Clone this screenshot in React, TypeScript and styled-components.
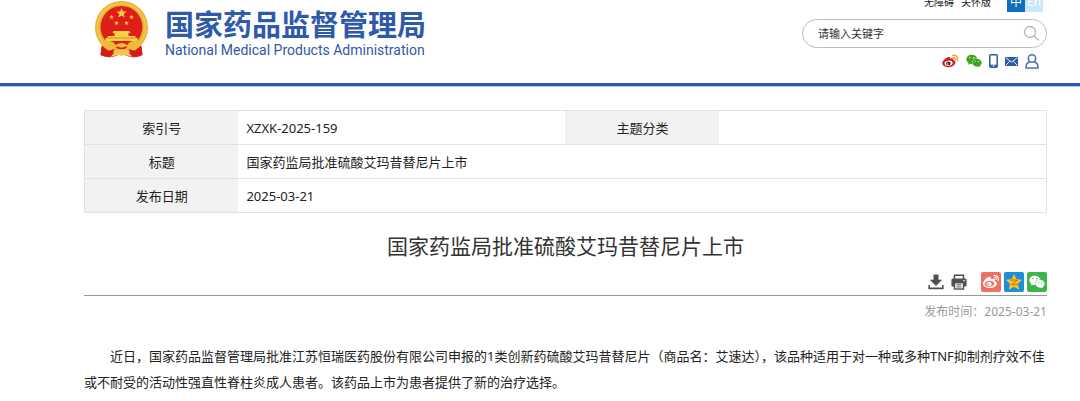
import React from "react";
import styled, { createGlobalStyle } from "styled-components";
import { FaWeibo, FaWeixin } from "react-icons/fa";

const BLUE = "#2f5aa8";

const GlobalStyle = createGlobalStyle`
  * { box-sizing: border-box; }
  body {
    margin: 0;
    background: #fff;
    color: #333;
    font: 13px/26px "Noto Sans", "Noto Sans CJK SC", sans-serif;
  }
  a { color: inherit; text-decoration: none; }
`;

const Header = styled.header`
  display: flex;
  justify-content: space-between;
  padding: 0 33px 14px 94px;
  border-bottom: 3px solid ${BLUE};
  box-shadow: 0 1px 0 #b4cbe6;
`;

const Brand = styled.a`
  display: flex;
  align-items: flex-start;
  gap: 16px;
  color: ${BLUE};
`;

const BrandText = styled.span`
  display: flex;
  flex-direction: column;
  padding-top: 5px;
`;

const BrandName = styled.strong`
  font: 700 29px/36px "Noto Sans CJK SC", sans-serif;
  white-space: nowrap;
`;

const BrandSub = styled.span`
  font: 400 14px/18px Roboto, sans-serif;
  white-space: nowrap;
`;

const Tools = styled.div`
  display: flex;
  flex-direction: column;
  width: 245px;
`;

const TopLinks = styled.nav`
  display: flex;
  justify-content: flex-end;
  align-items: flex-end;
  height: 12px;
  margin-bottom: 7px;
  padding-right: 4px;
  overflow: hidden;
  font-size: 10px;
  line-height: 20px;
  color: #222;
`;

const TopLink = styled.a`
  margin-right: 7px;
`;

const Languages = styled.span`
  display: flex;
  margin-left: 9px;
`;

const Language = styled.a<{ $active?: boolean }>`
  width: 18px;
  font-size: 12px;
  text-align: center;
  color: #fff;
  background: ${(p) => (p.$active ? "#0e6fbd" : "#c8e6fc")};
`;

const Search = styled.form`
  display: flex;
  align-items: center;
  height: 29px;
  padding: 0 6px 0 15px;
  border: 1px solid #bdbdbd;
  border-radius: 15px;
`;

const SearchInput = styled.input`
  flex: 1;
  min-width: 0;
  padding: 0;
  border: 0;
  outline: 0;
  background: none;
  font: 11px/20px "Noto Sans", "Noto Sans CJK SC", sans-serif;
  &::placeholder { color: #333; opacity: 1; }
`;

const IconButton = styled.button`
  display: flex;
  padding: 0;
  border: 0;
  background: none;
  color: #505050;
  cursor: pointer;
`;

const Channels = styled.nav`
  display: flex;
  justify-content: flex-end;
  align-items: center;
  gap: 7px;
  height: 16px;
  margin-top: 5px;
  padding-right: 8px;
  a { display: flex; }
`;

const Main = styled.main`
  padding: 24px 33px 8px 84px;
`;

const InfoTable = styled.table`
  width: 100%;
  table-layout: fixed;
  border-collapse: collapse;
  border: 1px solid #e2e2e2;
  color: #222;
`;

const InfoRow = styled.tr`
  height: 34px;
  border-bottom: 1px solid #e2e2e2;
`;

const LabelCol = styled.col`
  width: 16%;
`;

const ValueCol = styled.col`
  width: 34%;
`;

const Label = styled.th`
  padding: 0;
  font-weight: 400;
  background: #f2f2f2;
`;

const Value = styled.td`
  padding: 0 8px;
`;

const Title = styled.h1`
  margin: 17px 0 10px;
  font-size: 21px;
  line-height: 32px;
  font-weight: 400;
  text-align: center;
`;

const Share = styled.div`
  display: flex;
  justify-content: flex-end;
  align-items: center;
  gap: 7px;
  padding-bottom: 3px;
  border-bottom: 1px solid #999;
`;

const ShareLinks = styled.div`
  display: flex;
  gap: 3px;
  margin-left: 7px;
`;

const ShareLink = styled.a<{ $color: string }>`
  display: flex;
  align-items: center;
  justify-content: center;
  width: 20px;
  height: 20px;
  border-radius: 2px;
  color: #fff;
  background: ${(p) => p.$color};
`;

const Published = styled.p`
  margin: 6px 0 21px;
  font-size: 12px;
  line-height: 20px;
  text-align: right;
  color: #999;
`;

const Article = styled.p`
  margin: 0;
  text-indent: 2em;
  color: #222;
`;

const Emblem = () => (
  <svg width="55" height="58" viewBox="0 0 54 58" aria-hidden="true">
    <path d="M8 43 L6 55 Q12 58 18 57 L27 54 L36 57 Q43 58 48 55 L46 43Z" fill="#d9201b" />
    <circle cx="27" cy="27.500" r="26.500" fill="#e9b234" />
    <circle cx="27" cy="27.500" r="24" fill="none" stroke="#f3c54a" strokeWidth="2" />
    <circle cx="27" cy="27" r="21" fill="#dc2019" />
    <path d="m27 8 1.300 3.600h3.900l-3.100 2.300 1.200 3.700-3.300-2.200-3.300 2.200 1.200-3.700-3.100-2.300h3.900z" fill="#f8cf45" />
    <g fill="#f8cf45">
      {[[17, 17], [22, 23], [32, 23], [37, 17]].map(([x, y]) => (
        <path key={x} transform={`translate(${x} ${y})`} d="m0-2.300.7 1.500h1.600l-1.200 1.100.5 1.700-1.600-1-1.600 1 .5-1.700-1.200-1.100h1.600z" />
      ))}
      <path d="M19 31h16l1 2h-2v3h7v2h2v3H11v-3h2v-2h7v-3h-2z" />
    </g>
    <path d="M13 38h28" stroke="#d68c1f" />
    <path d="M8 41q11-1 13 4 6-4 12 0 2-5 13-4-2 8-12 8l-3-2q-4 2-8 0l-3 2q-10 0-12-8z" fill="#efb93c" />
    <path d="M7 46l6 5 7-2-3 7q-6 1-11-1zM47 46l-6 5-7-2 3 7q6 1 11-1z" fill="#d61c1a" />
    <path d="M21 51q6-4 12 0l5 6-8-2-3 1-3-1-8 2z" fill="#f1c650" />
    <path d="M22 47q5 3 10 0" stroke="#d61c1a" fill="none" strokeWidth="1.500" />
  </svg>
);

const WeiboColor = () => (
  <svg width="17" height="14" viewBox="0 0 17 14" aria-hidden="true">
    <path d="M6 3.200c1.500-.7 2.400 0 2 1.500 2-.8 3.700-.4 3.200 1.200 1.700.5 2.600 1.600 2 3.400-.9 2.500-3.700 3.900-6.900 3.900C2.700 13.200.3 11.500.3 9.100.3 7 3.300 4 6 3.200z" fill="#d8151b" />
    <ellipse cx="6.600" cy="9.200" rx="4.100" ry="2.600" fill="#fff" transform="rotate(-8 6.600 9.200)" />
    <ellipse cx="6.400" cy="9.400" rx="2.300" ry="1.900" fill="#333" />
    <circle cx="5.800" cy="9.900" r=".7" fill="#fff" />
    <path d="M10.800 1.300q5-.8 4.900 5M11 3.700q2.400-.2 2.500 2.300" fill="none" stroke="#f2a32b" strokeWidth="1.500" strokeLinecap="round" />
  </svg>
);

const Phone = () => (
  <svg width="9" height="14" viewBox="0 0 9 14" aria-hidden="true">
    <rect x=".8" y=".8" width="7.400" height="12.400" rx="1" fill="#fff" stroke={BLUE} strokeWidth="1.500" />
    <path d="M1 11.700h7" stroke={BLUE} strokeWidth="2" />
    <circle cx="4.500" cy="11.800" r=".7" fill="#fff" />
  </svg>
);

const Mail = () => (
  <svg width="13" height="9" viewBox="0 0 13 9" aria-hidden="true">
    <rect width="13" height="9" rx="1" fill={BLUE} />
    <path d="m1 1 5.500 4L12 1M1 8l3.500-3.500M12 8 8.500 4.500" fill="none" stroke="#fff" strokeWidth=".9" />
  </svg>
);

const Person = () => (
  <svg width="14" height="15" viewBox="0 0 14 15" fill="none" stroke="#4a6bb5" strokeWidth="1.500" aria-hidden="true">
    <circle cx="7" cy="4.500" r="3.700" />
    <path d="M4.500 8C2 8.700.9 10.500.9 14.100h12.200c0-3.600-1.100-5.400-3.600-6.100" strokeLinejoin="round" />
  </svg>
);

const Magnifier = () => (
  <svg width="17" height="17" viewBox="0 0 17 17" fill="none" stroke="#b5b5b5" strokeWidth="1.300" aria-hidden="true">
    <circle cx="7" cy="7" r="5.500" />
    <path d="m11 11 4.500 4" strokeLinecap="round" />
  </svg>
);

const Download = () => (
  <svg width="16" height="16" viewBox="0 0 16 16" aria-hidden="true">
    <path d="M5.500.5h5v5.300h3.700L8 12 1.800 5.800h3.700z" fill="currentColor" />
    <path d="M1.200 11v3.400h13.600V11" fill="none" stroke="currentColor" strokeWidth="1.600" />
  </svg>
);

const Printer = () => (
  <svg width="16" height="16" viewBox="0 0 16 16" aria-hidden="true">
    <path d="M3.500 5V1.200h9V5" fill="none" stroke="currentColor" strokeWidth="1.500" />
    <rect x=".4" y="4.500" width="15.200" height="8" rx="1.500" fill="currentColor" />
    <circle cx="13" cy="6.700" r=".8" fill="#fff" />
    <rect x="3.500" y="8.700" width="9" height="6.300" fill="#fff" stroke="currentColor" strokeWidth="1.400" />
    <path d="M5.500 10.800h5M5.500 12.900h5" stroke="currentColor" />
  </svg>
);

const QzoneStar = () => (
  <svg width="18" height="18" viewBox="0 0 18 18" aria-hidden="true">
    <path d="m9 .8 2.400 5.400 5.900.6-4.400 4 1.300 5.900L9 13.700l-5.200 3 1.300-5.900-4.400-4 5.900-.6z" fill="#fdc51c" />
    <path d="M5.500 7.300q3.500-.8 6.600 0L7 11.400q3 .7 6 0" fill="none" stroke="#d8791a" strokeWidth="1.200" />
  </svg>
);

export default function App() {
  return (
    <>
      <GlobalStyle />
      <Header>
        <Brand href="#">
          <Emblem />
          <BrandText>
            <BrandName>国家药品监督管理局</BrandName>
            <BrandSub>National Medical Products Administration</BrandSub>
          </BrandText>
        </Brand>
        <Tools>
          <TopLinks>
            <TopLink href="#">无障碍</TopLink>
            <TopLink href="#">关怀版</TopLink>
            <Languages>
              <Language href="#" $active>中</Language>
              <Language href="#">En</Language>
            </Languages>
          </TopLinks>
          <Search onSubmit={(e) => e.preventDefault()}>
            <SearchInput type="text" placeholder="请输入关键字" aria-label="请输入关键字" />
            <IconButton type="submit" aria-label="搜索"><Magnifier /></IconButton>
          </Search>
          <Channels>
            <a href="#" aria-label="微博"><WeiboColor /></a>
            <a href="#" aria-label="微信"><FaWeixin size={16} color="#3fa51f" /></a>
            <a href="#" aria-label="手机"><Phone /></a>
            <a href="#" aria-label="邮箱"><Mail /></a>
            <a href="#" aria-label="个人中心"><Person /></a>
          </Channels>
        </Tools>
      </Header>
      <Main>
        <InfoTable>
          <colgroup>
            <LabelCol />
            <ValueCol />
            <LabelCol />
            <ValueCol />
          </colgroup>
          <tbody>
            <InfoRow>
              <Label scope="row">索引号</Label>
              <Value>XZXK-2025-159</Value>
              <Label scope="row">主题分类</Label>
              <Value />
            </InfoRow>
            <InfoRow>
              <Label scope="row">标题</Label>
              <Value colSpan={3}>国家药监局批准硫酸艾玛昔替尼片上市</Value>
            </InfoRow>
            <InfoRow>
              <Label scope="row">发布日期</Label>
              <Value colSpan={3}>2025-03-21</Value>
            </InfoRow>
          </tbody>
        </InfoTable>
        <Title>国家药监局批准硫酸艾玛昔替尼片上市</Title>
        <Share>
          <IconButton type="button" aria-label="下载"><Download /></IconButton>
          <IconButton type="button" aria-label="打印"><Printer /></IconButton>
          <ShareLinks>
            <ShareLink href="#" $color="#ee6f64" aria-label="分享到微博"><FaWeibo size={16} /></ShareLink>
            <ShareLink href="#" $color="#1c8fdc" aria-label="分享到QQ空间"><QzoneStar /></ShareLink>
            <ShareLink href="#" $color="#3db54a" aria-label="分享到微信"><FaWeixin size={16} /></ShareLink>
          </ShareLinks>
        </Share>
        <Published>发布时间：2025-03-21</Published>
        <Article>
          近日，国家药品监督管理局批准江苏恒瑞医药股份有限公司申报的1类创新药硫酸艾玛昔替尼片（商品名：艾速达），该品种适用于对一种或多种TNF抑制剂疗效不佳或不耐受的活动性强直性脊柱炎成人患者。该药品上市为患者提供了新的治疗选择。
        </Article>
      </Main>
    </>
  );
}
